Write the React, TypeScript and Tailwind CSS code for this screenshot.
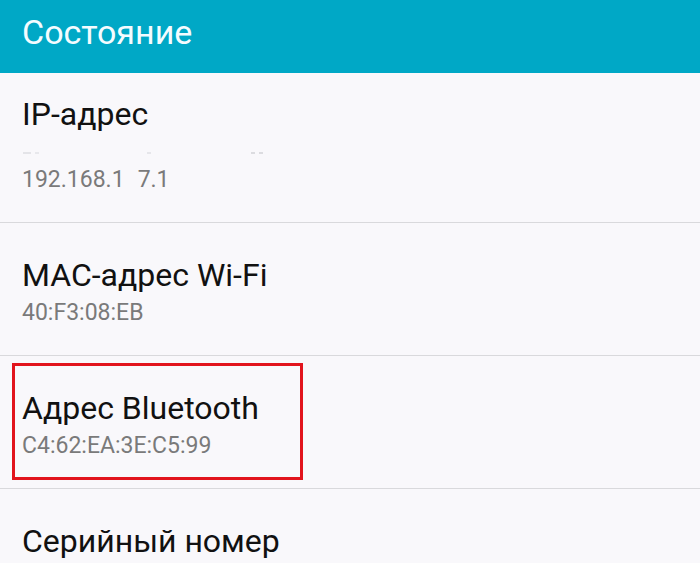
import React from "react";

const font = { fontFamily: "Roboto, 'Noto Sans', sans-serif" };

function Row({
  title,
  value,
  children,
}: {
  title: string;
  value: React.ReactNode;
  children?: React.ReactNode;
}) {
  return (
    <div className="relative border-t border-[#d9d9dc] px-[22px] pt-[34px] pb-[29px]">
      {children}
      <div className="text-[32px] leading-[36px] text-[#111111]">{title}</div>
      <div className="mt-[7px] text-[23px] leading-[26px] text-[#7a7a7a]">{value}</div>
    </div>
  );
}

export default function App() {
  return (
    <div className="h-[563px] w-[700px] overflow-hidden bg-[#f9f8fb]" style={font}>
      {/* Toolbar */}
      <div className="flex h-[73px] items-start bg-[#00a8c6] px-[22px] pt-[14px]">
        <span className="text-[34px] leading-[36px] text-[#f4fcff]">Состояние</span>
      </div>

      {/* IP address: first row, with a washed-out line above the value */}
      <div className="px-[22px] pt-[23px] pb-[29px]">
        <div className="text-[32px] leading-[36px] text-[#111111]">IP-адрес</div>
        <div className="flex h-[35px] items-center gap-0 pt-[6px]">
          <span className="ml-[1px] h-[2px] w-[8px] bg-[#e4e4e8]" />
          <span className="ml-[4px] h-[2px] w-[4px] bg-[#e8e8ec]" />
          <span className="ml-[108px] h-[2px] w-[4px] bg-[#e6e6ea]" />
          <span className="ml-[100px] h-[2px] w-[4px] bg-[#dcdce0]" />
          <span className="ml-[4px] h-[2px] w-[4px] bg-[#dcdce0]" />
        </div>
        <div className="text-[23px] leading-[26px] text-[#7a7a7a]">
          192.168.1<span className="ml-[13px]">7.1</span>
        </div>
      </div>

      <Row title="MAC-адрес Wi-Fi" value="40:F3:08:EB" />

      <Row title="Адрес Bluetooth" value="C4:62:EA:3E:C5:99">
        {/* highlight frame */}
        <div className="pointer-events-none absolute top-[7px] left-[12px] h-[117px] w-[291px] border-[3px] border-[#e2141d]" />
      </Row>

      <Row title="Серийный номер" value="" />
    </div>
  );
}
